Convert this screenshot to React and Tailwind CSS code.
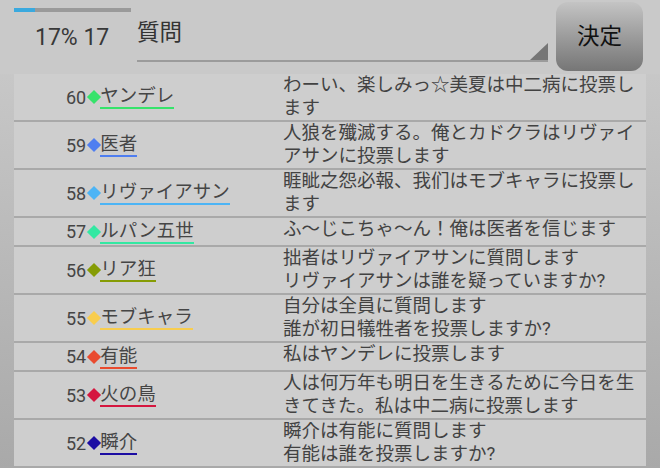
const rows = [
  { no: 60, name: 'ヤンデレ', color: '#36e36b', text: 'わーい、楽しみっ☆美夏は中二病に投票します' },
  { no: 59, name: '医者', color: '#4f7ef0', text: '人狼を殲滅する。俺とカドクラはリヴァイアサンに投票します' },
  { no: 58, name: 'リヴァイアサン', color: '#4cb4f5', text: '睚眦之怨必報、我们はモブキャラに投票します' },
  { no: 57, name: 'ルパン五世', color: '#33e8a2', text: 'ふ～じこちゃ～ん！俺は医者を信じます' },
  { no: 56, name: 'リア狂', color: '#869c05', text: '拙者はリヴァイアサンに質問します\nリヴァイアサンは誰を疑っていますか?' },
  { no: 55, name: 'モブキャラ', color: '#f8cd4e', text: '自分は全員に質問します\n誰が初日犠牲者を投票しますか?' },
  { no: 54, name: '有能', color: '#e94b2f', text: '私はヤンデレに投票します' },
  { no: 53, name: '火の鳥', color: '#d5163f', text: '人は何万年も明日を生きるために今日を生きてきた。私は中二病に投票します' },
  { no: 52, name: '瞬介', color: '#1c0da3', text: '瞬介は有能に質問します\n有能は誰を投票しますか?' },
];

const font = { fontFamily: 'Roboto, "Noto Sans CJK JP", sans-serif' };

function Row({ row }) {
  return (
    <div className="flex border-b-2 border-[#a9a9a9]">
      <div className="w-[269px] shrink-0 flex items-center pl-[52px] text-[18px] text-[#454545]">
        <span>{row.no}</span>
        <span
          className="ml-[3px] mr-[1px] w-[10px] h-[10px] rotate-45 shrink-0"
          style={{ backgroundColor: row.color }}
        />
        <span className="text-[18.5px] leading-[22px] border-b-2" style={{ borderColor: row.color }}>
          {row.name}
        </span>
      </div>
      <div className="flex-1 pr-[8px] text-[18.5px] leading-[23px] text-[#424242] whitespace-pre-line">
        {row.text}
      </div>
    </div>
  );
}

export default function App() {
  return (
    <div
      className="w-[660px] h-[468px] overflow-hidden bg-gradient-to-b from-[#cdcdcd] to-[#a9a9a9]"
      style={font}
    >
      <div className="h-[74px] flex bg-[#c9c9c9]">
        <div className="w-[137px] shrink-0 pl-[14px] pt-[8px]">
          <div className="w-[117px] h-[4px] bg-[#9a9a9a]">
            <div className="w-[21px] h-full bg-[#3aa9de]" />
          </div>
          <div className="pl-[21px] mt-[12px] text-[23px] leading-[28px] text-[#383838]">17% 17</div>
        </div>
        <div className="w-[411px] shrink-0 relative h-[62px] border-b-2 border-[#9b9b9b]">
          <div className="pt-[17px] text-[22.5px] leading-[30px] text-[#333]">質問</div>
          <svg className="absolute right-0 bottom-0" width="18" height="17" viewBox="0 0 18 17">
            <polygon points="18,0 18,17 0,17" fill="#757575" />
          </svg>
        </div>
        <button className="ml-[8px] mt-[2px] w-[87px] h-[69px] rounded-[12px] bg-gradient-to-b from-[#c4c4c4] to-[#767676] text-[22.5px] text-[#111]">
          決定
        </button>
      </div>
      <div className="mx-[14px] bg-[#cecece] h-full">
        {rows.map((row) => (
          <Row key={row.no} row={row} />
        ))}
      </div>
    </div>
  );
}
